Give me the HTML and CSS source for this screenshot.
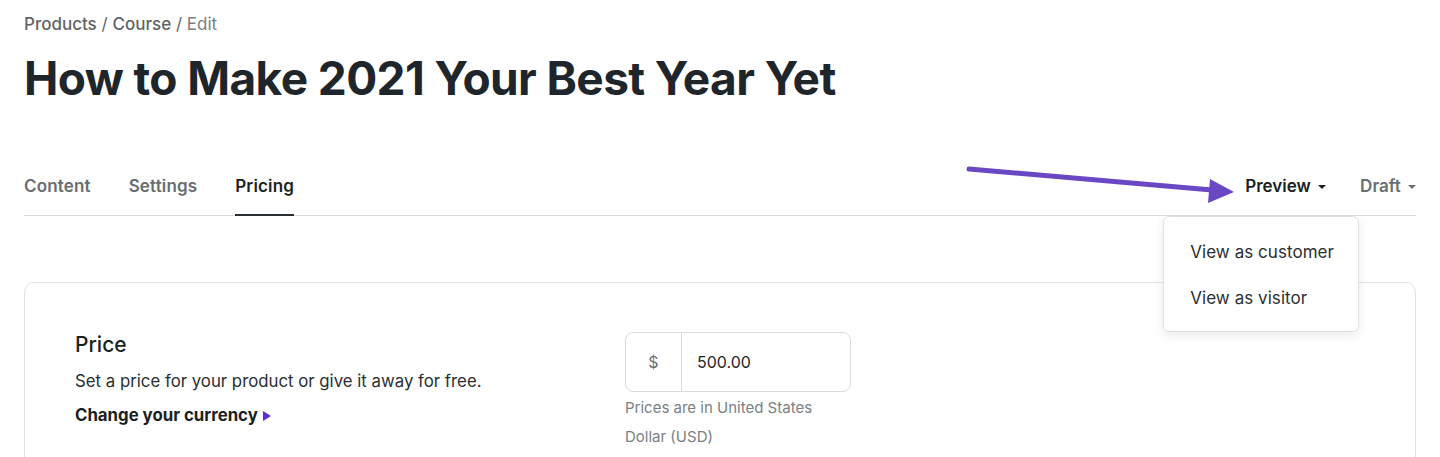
FILE: index.html
```html
<!DOCTYPE html>
<html lang="en">
<head>
<meta charset="utf-8">
<title>Edit course</title>
<link rel="stylesheet" href="styles.css">
</head>
<body>
<div class="page">
  <nav class="crumbs">
    <a class="crumb">Products</a> <span class="sep">/</span> <a class="crumb">Course</a> <span class="sep">/</span> <span class="current">Edit</span>
  </nav>
  <h1 class="title">How to Make 2021 Your Best Year Yet</h1>

  <div class="tabbar">
    <div class="tabs">
      <span class="tab">Content</span>
      <span class="tab">Settings</span>
      <span class="tab active">Pricing</span>
    </div>
    <div class="actions">
      <div class="action dark">Preview <span class="caret"></span>
        <div class="menu">
          <div class="menu-item">View as customer</div>
          <div class="menu-item">View as visitor</div>
        </div>
      </div>
      <div class="action">Draft <span class="caret"></span></div>
    </div>
    <svg class="pointer" width="280" height="50" viewBox="0 0 280 50">
      <line x1="9" y1="12" x2="252" y2="33" stroke="#6a48c4" stroke-width="5" stroke-linecap="round"/>
      <polygon points="274,35 250,22 248,46" fill="#6a48c4"/>
    </svg>
  </div>

  <section class="card">
    <div class="card-left">
      <h2 class="card-title">Price</h2>
      <p class="card-desc">Set a price for your product or give it away for free.</p>
      <a class="card-link">Change your currency <span class="tri"></span></a>
    </div>
    <div class="card-field">
      <div class="input-group">
        <span class="prefix">$</span>
        <span class="value">500.00</span>
      </div>
      <p class="help">Prices are in United States Dollar (USD)</p>
    </div>
  </section>
</div>
</body>
</html>
```
FILE: styles.css
```css
* { box-sizing: border-box; }
html, body { margin: 0; padding: 0; background: #fff; }
body {
  font-family: Inter, "Noto Sans", sans-serif;
  color: #1f262b;
  overflow: hidden;
  height: 457px;
}
.page { padding: 0 24px; }

.crumbs {
  padding-top: 13px;
  font-size: 17px;
  line-height: 22px;
  color: #5f6466;
}
.crumb { font-weight: 500; color: #5f6466; }
.sep { color: #5f6466; }
.current { color: #7a7f82; }

.title {
  margin: 15px 0 0;
  font-size: 46px;
  line-height: 56px;
  font-weight: 700;
  letter-spacing: -0.6px;
  color: #1f262b;
}

.tabbar {
  position: relative;
  margin-top: 64px;
  display: flex;
  justify-content: space-between;
  align-items: stretch;
  border-bottom: 1px solid #dcdcdc;
  height: 46px;
}
.tabs { display: flex; gap: 38px; }
.tab {
  font-size: 17px;
  font-weight: 600;
  color: #686d70;
  line-height: 22px;
  padding-top: 5px;
  letter-spacing: 0.15px;
  border-bottom: 2px solid transparent;
  margin-bottom: -1px;
}
.tab.active { color: #1a1f22; border-bottom-color: #2a2f33; }

.actions { display: flex; gap: 34px; }
.action {
  position: relative;
  font-size: 17px;
  font-weight: 600;
  color: #6a6f72;
  line-height: 22px;
  padding-top: 5px;
  white-space: nowrap;
}
.action.dark { color: #1a1f22; }
.caret {
  display: inline-block;
  width: 0; height: 0;
  border-left: 4px solid transparent;
  border-right: 4px solid transparent;
  border-top: 4px solid currentColor;
  vertical-align: middle;
  margin-left: 3px;
}

.pointer {
  position: absolute;
  left: 936px;
  top: -13px;
}

.menu {
  position: absolute;
  top: 46px;
  left: -82px;
  width: 196px;
  padding: 20px 0 18px;
  background: #fff;
  border: 1px solid #e0e0e0;
  border-radius: 6px;
  box-shadow: 0 4px 12px rgba(0,0,0,0.08);
  z-index: 5;
}
.menu-item {
  padding: 0 26px;
  font-size: 17px;
  font-weight: 400;
  letter-spacing: 0.05px;
  color: #2a2f33;
  line-height: 30px;
}
.menu-item + .menu-item { margin-top: 16px; }

.card {
  margin-top: 66px;
  border: 1px solid #e2e2e2;
  border-radius: 10px;
  padding: 49px 50px 40px;
  display: flex;
  height: 240px;
}
.card-left { width: 550px; }
.card-title {
  margin: 0;
  font-size: 21px;
  font-weight: 500;
  line-height: 26px;
  color: #1a1f22;
}
.card-desc {
  margin: 12px 0 0;
  font-size: 16.8px;
  line-height: 22px;
  color: #2a2f33;
}
.card-link {
  display: block;
  margin-top: 12px;
  font-size: 16.8px;
  font-weight: 700;
  line-height: 22px;
  color: #1a1f22;
}
.tri {
  display: inline-block;
  width: 0; height: 0;
  border-top: 5px solid transparent;
  border-bottom: 5px solid transparent;
  border-left: 8px solid #5b2fd6;
  vertical-align: middle;
  margin-left: 1px;
}

.card-field { width: 226px; }
.input-group {
  display: flex;
  height: 60px;
  border: 1px solid #dcdcdc;
  border-radius: 8px;
}
.prefix {
  width: 56px;
  border-right: 1px solid #dcdcdc;
  display: flex;
  align-items: center;
  justify-content: center;
  font-size: 16px;
  color: #6a6f72;
}
.value {
  display: flex;
  align-items: center;
  padding-left: 15px;
  font-size: 16px;
  color: #1f262b;
}
.help {
  margin: 1px 0 0;
  font-size: 15px;
  line-height: 29px;
  color: #7a7f82;
  width: 200px;
}
```
